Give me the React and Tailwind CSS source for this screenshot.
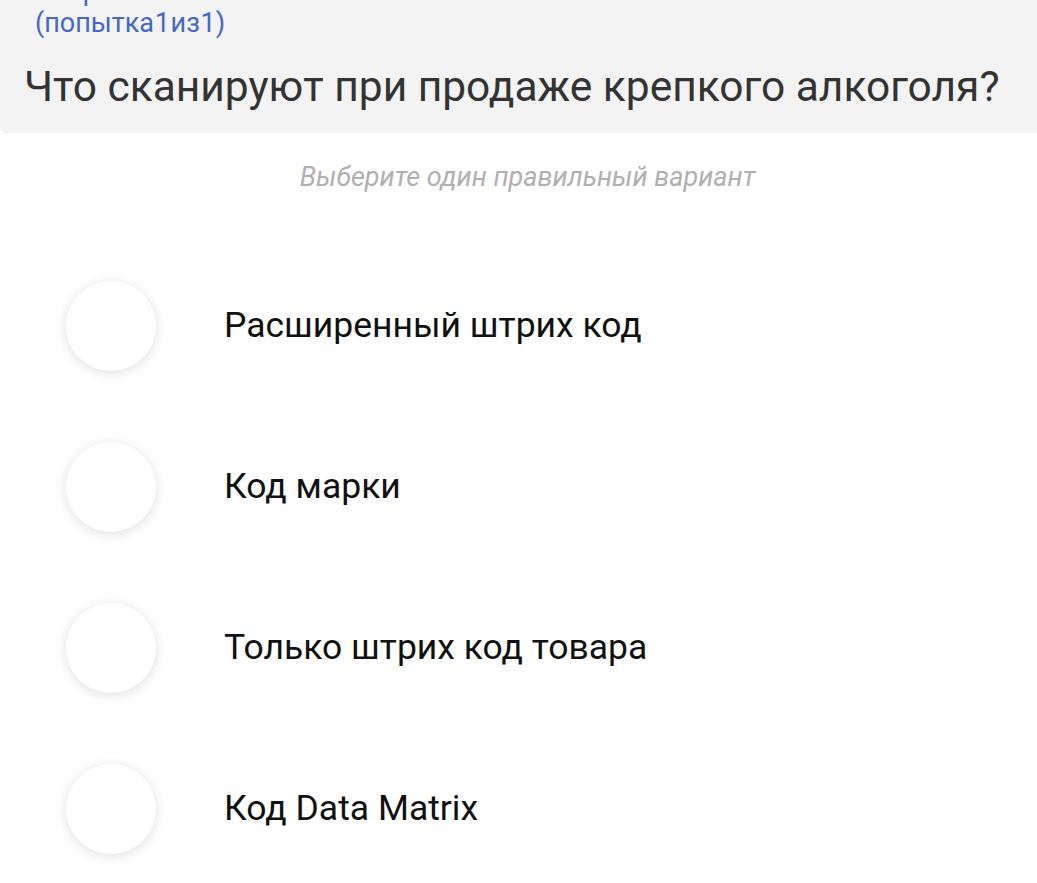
const options = [
  'Расширенный штрих код',
  'Код марки',
  'Только штрих код товара',
  'Код Data Matrix',
];

const Option = ({ label }) => (
  <label className="flex items-center h-[161px] cursor-pointer">
    <span className="ml-[66px] w-[90px] h-[90px] shrink-0 rounded-full bg-white shadow-[0_2px_12px_rgba(0,0,0,0.13)]" />
    <span className="ml-[68px] text-[35.5px] leading-none text-[#111]">{label}</span>
  </label>
);

export default function App() {
  return (
    <div className="min-h-[883px] bg-white overflow-hidden" style={{ fontFamily: 'Roboto, "Noto Sans", sans-serif' }}>
      <div className="bg-[#f3f3f3] rounded-bl-[6px] h-[133px] overflow-hidden">
        <div className="-mt-[25px] pl-[35px] text-[27px] leading-[32px] text-[#4468c6]">
          <div>Вопрос 1</div>
          <div className="[word-spacing:-6px]">(попытка 1 из 1)</div>
        </div>
        <h1 className="mt-[23px] pl-[24px] text-[42.5px] leading-[50px] text-[#333] font-normal whitespace-nowrap">
          Что сканируют при продаже крепкого алкоголя?
        </h1>
      </div>
      <p className="mt-[28px] pl-[18px] text-center italic text-[27px] leading-[32px] text-[#b0b0b0]">
        Выберите один правильный вариант
      </p>
      <div className="mt-[52px]">
        {options.map((o) => (
          <Option key={o} label={o} />
        ))}
      </div>
    </div>
  );
}
